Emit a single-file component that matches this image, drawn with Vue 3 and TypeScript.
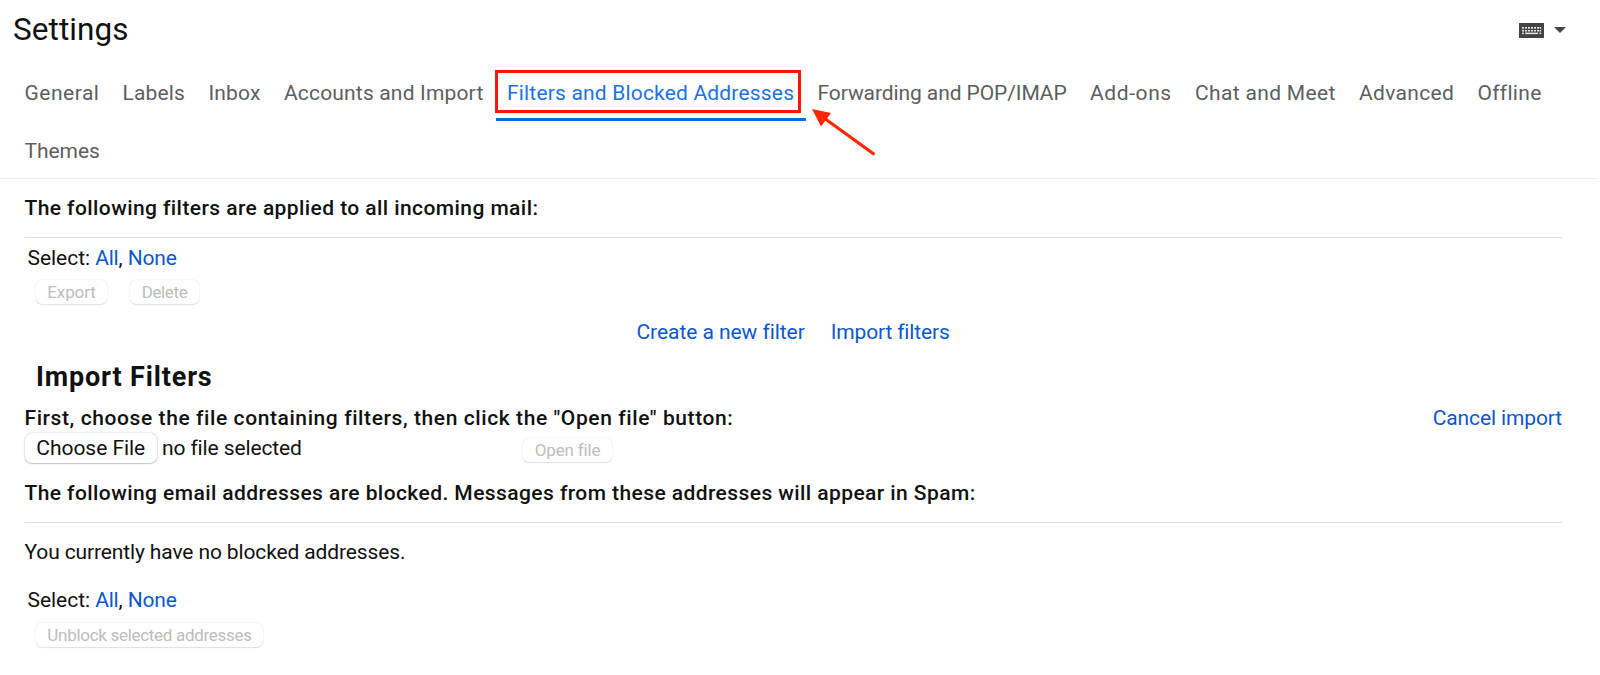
<script setup lang="ts">
interface Tab {
  id: string
  label: string
  active?: boolean
}

const tabs: Tab[] = [
  { id: 'general', label: 'General' },
  { id: 'labels', label: 'Labels' },
  { id: 'inbox', label: 'Inbox' },
  { id: 'accounts', label: 'Accounts and Import' },
  { id: 'filters', label: 'Filters and Blocked Addresses', active: true },
  { id: 'forwarding', label: 'Forwarding and POP/IMAP' },
  { id: 'addons', label: 'Add-ons' },
  { id: 'chat', label: 'Chat and Meet' },
  { id: 'advanced', label: 'Advanced' },
  { id: 'offline', label: 'Offline' },
  { id: 'themes', label: 'Themes' },
]

const keyColumns = [3.5, 6.5, 9.5, 12.5, 15.5, 18.5]
</script>

<template>
  <main class="settings">
    <header class="top">
      <h1>Settings</h1>
      <div class="input-tools">
        <svg class="keyboard" viewBox="0 0 25 15" width="25" height="15">
          <rect width="25" height="15" fill="#444" />
          <g fill="#e4e4e4">
            <template v-for="x in keyColumns" :key="x">
              <rect :x="x - 0.5" y="4" width="2" height="1.7" />
              <rect :x="x - 0.5" y="7" width="2" height="1.5" />
            </template>
            <rect x="20.6" y="4" width="1.6" height="1.7" />
            <rect x="20.6" y="7" width="1.6" height="1.5" />
            <rect x="3" y="9.6" width="1.8" height="1.5" />
            <rect x="6" y="9.6" width="13" height="1.5" />
            <rect x="20.4" y="9.6" width="1.8" height="1.5" />
          </g>
        </svg>
        <svg class="caret" viewBox="0 0 12 6" width="12" height="6">
          <path d="M0 0H12L6 6Z" fill="#444" />
        </svg>
      </div>
    </header>

    <nav class="tabs">
      <a v-for="tab in tabs" :key="tab.id" class="tab" :class="[tab.id, { active: tab.active }]">
        <span>{{ tab.label }}</span>
        <template v-if="tab.active">
          <i class="highlight"></i>
          <svg class="arrow" viewBox="0 0 68 52" width="68" height="52">
            <path d="M14 10L64.5 46.5" stroke="#ff2600" stroke-width="3.2" />
            <path d="M2 1L21 5L11 18.5Z" fill="#ff2600" />
          </svg>
        </template>
      </a>
    </nav>

    <section class="filters-panel">
      <h2 class="applied">The following filters are applied to all incoming mail:</h2>
      <hr />
      <p class="select">Select: <a class="all">All</a>, <a class="none">None</a></p>
      <div class="actions">
        <button class="small export" disabled>Export</button>
        <button class="small delete" disabled>Delete</button>
      </div>
      <div class="links">
        <a class="create">Create a new filter</a>
        <a class="import">Import filters</a>
      </div>
    </section>

    <section class="import-panel">
      <h3>Import Filters</h3>
      <div class="import-head">
        <h2 class="first">First, choose the file containing filters, then click the "Open file" button:</h2>
        <a class="cancel">Cancel import</a>
      </div>
      <div class="file-row">
        <button class="choose">Choose File</button>
        <span class="no-file">no file selected</span>
        <button class="small open" disabled>Open file</button>
      </div>
    </section>

    <section class="blocked-panel">
      <h2 class="blocked">The following email addresses are blocked. Messages from these addresses will appear in Spam:</h2>
      <hr />
      <p class="empty">You currently have no blocked addresses.</p>
      <p class="select">Select: <a class="all">All</a>, <a class="none">None</a></p>
      <div class="actions">
        <button class="small unblock" disabled>Unblock selected addresses</button>
      </div>
    </section>
  </main>
</template>

<style>
body {
  margin: 0;
  background: #fff;
}
</style>

<style scoped>
.settings {
  box-sizing: border-box;
  width: 1600px;
  height: 675px;
  overflow: hidden;
  background: #fff;
  color: #111;
  font: 400 21px/24px Roboto, "Liberation Sans", sans-serif;
}
h1, h2, h3, p { margin: 0; white-space: nowrap; }
a { color: #0b57d0; white-space: nowrap; }

.top {
  display: flex;
  justify-content: space-between;
  height: 63px;
  padding: 0 34px 0 13px;
}
h1 {
  padding-top: 10px;
  font-size: 31.5px;
  font-weight: 400;
  line-height: 40px;
  letter-spacing: 0.07px;
}
.input-tools { display: flex; gap: 10px; padding-top: 23px; }
.caret { margin-top: 4px; }

.tabs {
  display: flex;
  flex-wrap: wrap;
  width: 1584px;
  height: 115px;
  padding-left: 13.5px;
  border-bottom: 1px solid #ececec;
}
.tab {
  position: relative;
  box-sizing: border-box;
  height: 58px;
  padding-left: 11px;
  line-height: 60px;
  color: #5c5e60;
}
.tab.general { width: 98px; letter-spacing: 0.5px; }
.tab.labels { width: 86px; letter-spacing: 0.15px; }
.tab.inbox { width: 75.5px; letter-spacing: 0.15px; }
.tab.accounts { width: 222px; letter-spacing: 0.17px; }
.tab.filters { width: 310.5px; padding-left: 12px; letter-spacing: 0.18px; }
.tab.forwarding { width: 273.5px; padding-left: 12px; letter-spacing: -0.09px; }
.tab.addons { width: 104.5px; letter-spacing: 0.6px; }
.tab.chat { width: 164px; padding-left: 11.5px; letter-spacing: 0.34px; }
.tab.advanced { width: 118.5px; padding-left: 11.5px; letter-spacing: 0.33px; }
.tab.offline { width: 88px; padding-left: 11.5px; letter-spacing: 0.3px; }
.tab.themes { letter-spacing: -0.05px; }
.tab.active { color: #1a73e8; }
.tab.active::after {
  content: "";
  position: absolute;
  right: 0;
  bottom: 0;
  left: 1px;
  height: 3px;
  background: #0b6be3;
}
.highlight {
  position: absolute;
  top: 7px;
  left: 0;
  box-sizing: border-box;
  width: 306px;
  height: 43px;
  border: 3px solid #ff1500;
}
.arrow {
  position: absolute;
  top: 45px;
  left: 315px;
  z-index: 1;
}

h2 { font-size: 21px; font-weight: 500; line-height: 24px; }
.applied { padding-bottom: 17px; letter-spacing: 0.42px; }
.first { letter-spacing: 0.59px; }
.blocked { padding-bottom: 17px; letter-spacing: 0.422px; }
hr { height: 1px; margin: 0; border: 0; background: #dedede; }

section { padding: 0 38px 0 24.5px; }
.filters-panel { padding-top: 17px; }
.select { padding: 8px 0 0 3px; letter-spacing: -0.03px; }
.all { letter-spacing: -0.25px; }
.none { letter-spacing: -0.2px; }

button {
  box-sizing: border-box;
  margin: 0;
  padding: 0;
  border: 0;
  border-radius: 6px;
  background: #fff;
  color: #111;
  font-family: inherit;
  white-space: nowrap;
}
.small {
  height: 24px;
  box-shadow: 0 0 1.5px rgba(0, 0, 0, 0.17), 0 1px 1px rgba(0, 0, 0, 0.09);
  color: #bdbdbd;
  font-size: 17px;
  line-height: 24px;
}
.actions { display: flex; gap: 23px; padding: 10px 0 0 11.5px; }
.export { width: 71px; letter-spacing: -0.1px; }
.delete { width: 69px; letter-spacing: -0.37px; }
.links { display: flex; gap: 26px; padding: 16px 0 0 612px; }
.create { letter-spacing: -0.06px; }
.import { letter-spacing: -0.16px; }

h3 {
  padding: 17px 0 0 11.5px;
  font-size: 27px;
  font-weight: 700;
  line-height: 32px;
  letter-spacing: 0.85px;
}
.import-head { display: flex; justify-content: space-between; padding-top: 13px; }
.cancel { letter-spacing: -0.13px; }
.file-row { display: flex; align-items: flex-start; padding-top: 3px; }
.choose {
  width: 132.5px;
  height: 30px;
  border-radius: 7px;
  box-shadow: 0 0 1.5px rgba(0, 0, 0, 0.3), 0 1px 1.5px rgba(0, 0, 0, 0.18);
  font-size: 21px;
  line-height: 30px;
  letter-spacing: -0.05px;
}
.no-file { box-sizing: border-box; width: 366px; padding: 3px 0 0 5px; letter-spacing: -0.12px; }
.open { width: 89px; margin-top: 5px; letter-spacing: -0.17px; }

.blocked-panel { padding-top: 18px; }
.empty { padding: 17px 0 16px; letter-spacing: -0.13px; }
.blocked-panel .actions { padding-top: 11px; }
.unblock { width: 227px; letter-spacing: -0.3px; }
</style>
